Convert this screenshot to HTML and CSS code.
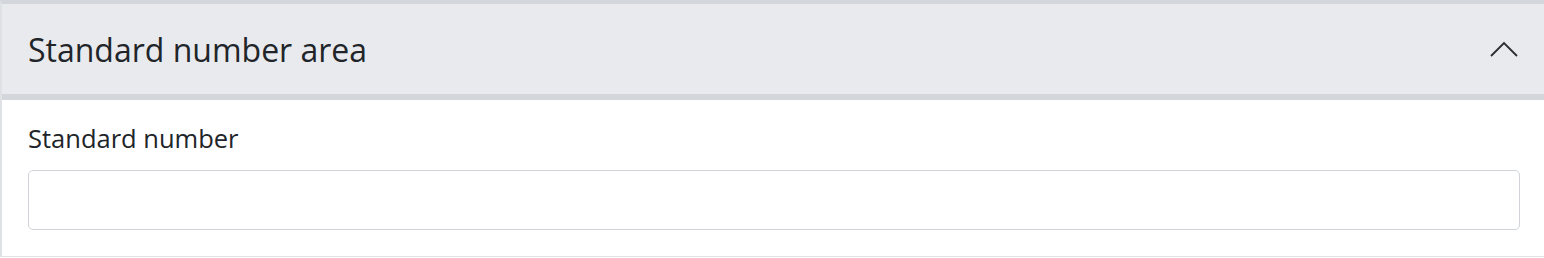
FILE: index.html
```html
<!DOCTYPE html>
<html lang="en">
<head>
<meta charset="utf-8">
<title>Standard number area</title>
<link rel="stylesheet" href="styles.css">
</head>
<body>
<section class="panel">
  <header class="panel-header">
    <h2 class="panel-title">Standard number area</h2>
    <button class="toggle" type="button" aria-label="Collapse">
      <svg width="28" height="16" viewBox="0 0 28 16"><path d="M1 15 L14 2 L27 15" fill="none" stroke="#2b2d31" stroke-width="1.8"/></svg>
    </button>
  </header>
  <div class="panel-body">
    <label class="field-label" for="std">Standard number</label>
    <input class="field-input" id="std" type="text">
  </div>
</section>
</body>
</html>
```

FILE: styles.css
```css
html, body {
  margin: 0;
  padding: 0;
  background: #ffffff;
}
body {
  font-family: "Open Sans", "Noto Sans", sans-serif;
  color: #212529;
}
.panel {
  border-top: 4px solid #d3d7db;
  border-left: 2px solid #dfe2e5;
  border-bottom: 1px solid #dfe2e5;
  width: 1542px;
}
.panel-header {
  height: 90px;
  background: #e9eaee;
  border-bottom: 6px solid #d3d7db;
  display: flex;
  align-items: center;
  justify-content: space-between;
  padding: 0 26px 0 26px;
  box-sizing: content-box;
}
.panel-title {
  margin: 0;
  font-size: 32px;
  font-weight: 400;
  color: #212529;
}
.toggle {
  background: none;
  border: 0;
  padding: 0;
  display: flex;
}
.panel-body {
  padding: 22px 24px 26px 26px;
  display: flex;
  flex-direction: column;
}
.field-label {
  font-size: 25.5px;
  line-height: 32px;
  margin-bottom: 16px;
}
.field-input {
  height: 60px;
  box-sizing: border-box;
  border: 1px solid #d0d4d9;
  border-radius: 5px;
  font: inherit;
}
```
